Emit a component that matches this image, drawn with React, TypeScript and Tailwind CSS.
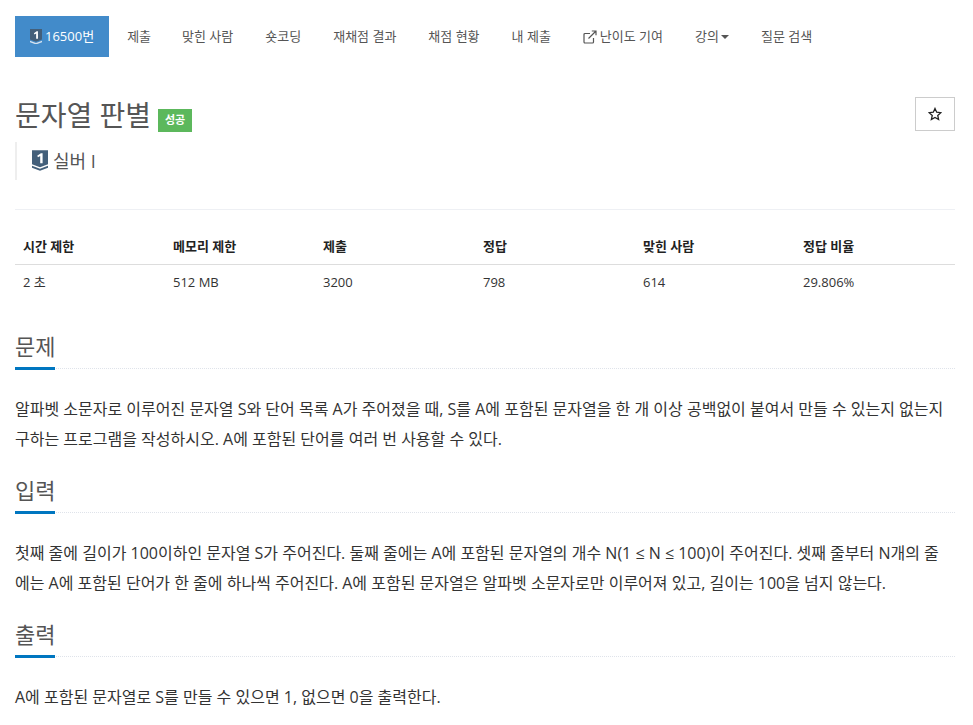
const font = { fontFamily: '"Open Sans","Noto Sans CJK KR",sans-serif' };

function Tier({ size, fill, chevron }: { size: number; fill: string; chevron: string }) {
  return (
    <svg width={size} height={size * 1.33} viewBox="0 0 16 21" className="shrink-0">
      <path d="M0 0H16V14L8 17L0 14Z" fill={fill} />
      <path d="M0 15.5L8 18.5L16 15.5V17.5L8 20.5L0 17.5Z" fill={chevron} />
      <path d="M8.9 3H10.6V13H8.2V5.8L6 7.2L5.2 5.6Z" fill="#fff" />
    </svg>
  );
}

function Section({ title, children }: { title: string; children: React.ReactNode }) {
  return (
    <section className="mb-[20px]">
      <div className="relative border-b border-dotted border-[#dfe3ea] h-[39px]">
        <h2 className="text-[22px] leading-[32px] text-[#555]">{title}</h2>
        <div className="absolute left-0 bottom-[-2px] w-[40px] h-[3px] bg-[#0076c0]" />
      </div>
      <p className="mt-[25px] pr-[8px] text-[16px] leading-[30px] text-[#333] h-[60px]">{children}</p>
    </section>
  );
}

const items = ["맞힌 사람", "숏코딩", "재채점 결과", "채점 현황", "내 제출"];
const cols = ["w-[150px]", "w-[150px]", "w-[160px]", "w-[160px]", "w-[160px]", "w-[160px]"];
const heads = ["시간 제한", "메모리 제한", "제출", "정답", "맞힌 사람", "정답 비율"];
const vals = ["2 초", "512 MB", "3200", "798", "614", "29.806%"];

export default function App() {
  return (
    <div className="w-[973px] h-[725px] overflow-hidden bg-white pl-[15px] pr-[18px] pt-[16px]" style={font}>
      <nav className="flex gap-[2px] text-[13px] text-[#555] h-[41px] items-stretch">
        <div className="flex items-center gap-[3px] px-[15px] bg-[#428bca] text-white">
          <Tier size={12} fill="#435f7a" chevron="#d5e2ef" />
          <span>16500번</span>
        </div>
        <div className="flex items-center pl-[16px] pr-[14px]">제출</div>
        {items.map((t) => (
          <div key={t} className="flex items-center px-[15px]">{t}</div>
        ))}
        <div className="flex items-center px-[15px] gap-[3px]">
          <svg width="14" height="14" viewBox="0 0 14 14" fill="none" stroke="#555" strokeWidth="1.2">
            <path d="M10.5 8V12A1 1 0 0 1 9.5 13H2A1 1 0 0 1 1 12V4.5A1 1 0 0 1 2 3.5H7" />
            <path d="M5.5 8.5L12.5 1.5M8.8 1H13V5.2" />
          </svg>
          <span>난이도 기여</span>
        </div>
        <div className="flex items-center px-[15px]">
          강의
          <span className="ml-[2px] border-x-[4px] border-x-transparent border-t-[4px] border-t-[#555] mt-[1px]" />
        </div>
        <div className="flex items-center px-[15px]">질문 검색</div>
      </nav>

      <div className="flex justify-between mt-[40px] h-[45px]">
        <div className="flex items-start">
          <h1 className="text-[28px] leading-[34px] text-[#555] mt-[1px]">문자열 판별</h1>
          <span className="ml-[7px] mt-[12px] w-[34px] h-[23px] bg-[#5cb85c] text-white text-[11px] font-bold flex items-center justify-center">성공</span>
        </div>
        <button className="w-[40px] h-[34px] border border-[#ccc] flex items-center justify-center">
          <svg width="14" height="14" viewBox="0 0 24 24" fill="none" stroke="#222" strokeWidth="2.2">
            <path d="M12 2.5L14.9 9L22 9.7L16.7 14.5L18.2 21.5L12 17.9L5.8 21.5L7.3 14.5L2 9.7L9.1 9Z" />
          </svg>
        </button>
      </div>

      <div className="border-l-2 border-[#eee] h-[38px] pl-[15px] flex items-center gap-[5px] text-[18px] text-[#555]">
        <Tier size={16} fill="#435f7a" chevron="#435f7a" />
        <span>실버 I</span>
      </div>

      <div className="mt-[29px] border-t border-[#eef0f4]" />

      <table className="mt-[20px] w-[940px] table-fixed text-[13px] text-[#333] border-collapse">
        <thead>
          <tr className="border-b border-[#ddd]">
            {heads.map((h, i) => (
              <th key={h} className={`${cols[i]} text-left px-[8px] h-[34px] font-bold text-[#222]`}>{h}</th>
            ))}
          </tr>
        </thead>
        <tbody>
          <tr>
            {vals.map((v) => (
              <td key={v} className="px-[8px] h-[36px]">{v}</td>
            ))}
          </tr>
        </tbody>
      </table>

      <div className="mt-[30px]">
        <Section title="문제">
          알파벳 소문자로 이루어진 문자열 S와 단어 목록 A가 주어졌을 때, S를 A에 포함된 문자열을 한 개 이상 공백없이 붙여서 만들 수 있는지 없는지 구하는 프로그램을 작성하시오. A에 포함된 단어를 여러 번 사용할 수 있다.
        </Section>
        <Section title="입력">
          첫째 줄에 길이가 100이하인 문자열 S가 주어진다. 둘째 줄에는 A에 포함된 문자열의 개수 N(1 ≤ N ≤ 100)이 주어진다. 셋째 줄부터 N개의 줄에는 A에 포함된 단어가 한 줄에 하나씩 주어진다. A에 포함된 문자열은 알파벳 소문자로만 이루어져 있고, 길이는 100을 넘지 않는다.
        </Section>
        <Section title="출력">A에 포함된 문자열로 S를 만들 수 있으면 1, 없으면 0을 출력한다.</Section>
      </div>
    </div>
  );
}
